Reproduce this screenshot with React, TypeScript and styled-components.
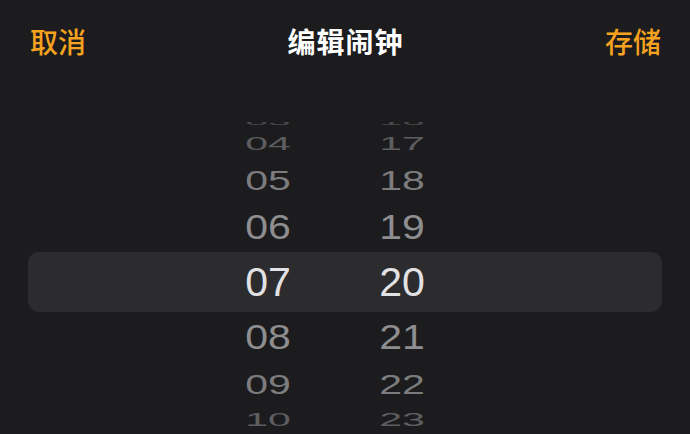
import styled, { createGlobalStyle } from "styled-components";

const GlobalStyle = createGlobalStyle`
  html, body {
    margin: 0;
    padding: 0;
    background: #1c1c1e;
  }
  body {
    font-family: "Liberation Sans", "Noto Sans CJK SC", sans-serif;
  }
`;

// 한 줄씩: 시/분 값, 줄 높이, 세로 압축 비율, 색
type WheelRow = {
  hour: string;
  minute: string;
  height: number;
  scale: number;
  color: string;
  selected?: boolean;
};

const rows: WheelRow[] = [
  { hour: "03", minute: "16", height: 16, scale: 0.22, color: "#4a4a4c" },
  { hour: "04", minute: "17", height: 28, scale: 0.44, color: "#5e5e60" },
  { hour: "05", minute: "18", height: 44, scale: 0.68, color: "#7c7c7e" },
  { hour: "06", minute: "19", height: 50, scale: 0.86, color: "#8e8e90" },
  { hour: "07", minute: "20", height: 60, scale: 1, color: "#e2e2e4", selected: true },
  { hour: "08", minute: "21", height: 50, scale: 0.86, color: "#8e8e90" },
  { hour: "09", minute: "22", height: 44, scale: 0.68, color: "#7c7c7e" },
  { hour: "10", minute: "23", height: 28, scale: 0.44, color: "#5e5e60" },
  { hour: "11", minute: "24", height: 16, scale: 0.22, color: "#4a4a4c" },
];

const App = () => {
  return (
    <Screen>
      <GlobalStyle />
      <NavBar>
        <NavButton>取消</NavButton>
        <NavTitle>编辑闹钟</NavTitle>
        <NavButton $align="right">存储</NavButton>
      </NavBar>
      <Picker>
        {rows.map((row) => (
          <PickerRow
            key={row.hour}
            $height={row.height}
            $selected={row.selected}
          >
            <Cell $scale={row.scale} $color={row.color}>
              {row.hour}
            </Cell>
            <Cell $scale={row.scale} $color={row.color}>
              {row.minute}
            </Cell>
          </PickerRow>
        ))}
      </Picker>
    </Screen>
  );
};

export default App;

const Screen = styled.div`
  width: 690px;
  height: 434px;
  background: #1c1c1e;
  overflow: hidden;
  display: flex;
  flex-direction: column;
`;

const NavBar = styled.div`
  display: grid;
  grid-template-columns: 1fr auto 1fr;
  align-items: center;
  height: 82px;
  padding: 0 29px 0 30px;
`;

const NavButton = styled.div<{ $align?: "left" | "right" }>`
  font-family: "Noto Sans CJK SC", sans-serif;
  font-size: 28px;
  font-weight: 500;
  color: #f5a21e;
  text-align: ${(props) => props.$align ?? "left"};
`;

const NavTitle = styled.div`
  font-family: "Noto Sans CJK SC", sans-serif;
  font-size: 28px;
  font-weight: 600;
  color: #ffffff;
  letter-spacing: 1px;
`;

const Picker = styled.div`
  margin-top: 40px;
  flex: 1;
  overflow: hidden;
  display: flex;
  flex-direction: column;
`;

const PickerRow = styled.div<{ $height: number; $selected?: boolean }>`
  flex: none;
  height: ${(props) => props.$height}px;
  margin: 0 28px;
  padding-right: 20px;
  display: flex;
  justify-content: center;
  align-items: center;
  border-radius: 11px;
  background: ${(props) => (props.$selected ? "#2c2c2f" : "transparent")};

  &:first-child {
    margin-top: -8px;
  }
`;

const Cell = styled.div<{ $scale: number; $color: string }>`
  width: 134px;
  text-align: center;
  font-family: "Liberation Sans", sans-serif;
  font-size: 41px;
  line-height: 40px;
  color: ${(props) => props.$color};
  transform: scaleY(${(props) => props.$scale});
`;
